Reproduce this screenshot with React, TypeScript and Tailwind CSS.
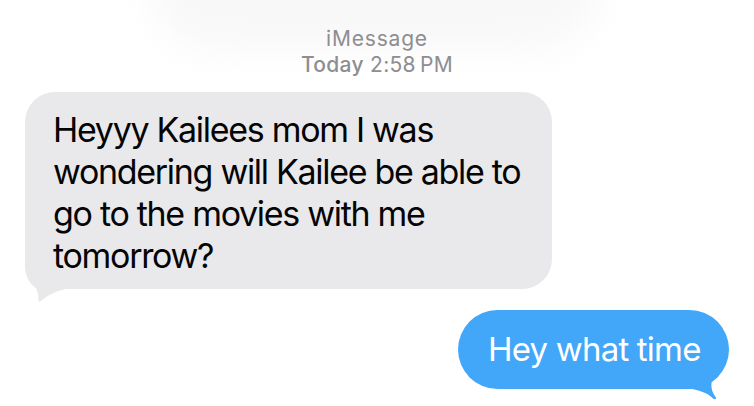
import React from 'react';

const FONT = 'font-["Inter","Liberation_Sans",sans-serif]';

// tail paths are drawn in the coordinates of the bubble's bottom-right corner
const BLUE_TAIL =
  'M -50 0 L -42 -1 C -30 1 -21 4 -16 9.5 C -14 11 -12.5 10 -13 8.5 C -16.5 4 -18 0 -17.5 -6 L -17.5 -30 L -50 -30 Z';
const GRAY_TAIL =
  'M -50 0 L -46 -1 C -34 1 -24 5 -16.5 11.5 C -14.5 13.5 -13 12.5 -13.5 10.5 C -13.5 6 -12.5 2 -11 -1 C -6 -4 0 -12 0 -22 L 0 -30 L -50 -30 Z';

const Tail: React.FC<{ d: string; color: string; side: 'left' | 'right' }> = ({ d, color, side }) => (
  <svg
    width="55"
    height="50"
    viewBox="-50 -30 55 50"
    className={
      side === 'right'
        ? 'absolute right-[-5px] bottom-[-20px]'
        : 'absolute left-[-5px] bottom-[-20px] -scale-x-100'
    }
  >
    <path d={d} fill={color} />
  </svg>
);

export default function App() {
  return (
    <div className={`relative w-[754px] h-[406px] overflow-hidden bg-white ${FONT}`}>
      {/* faint blur from the contact header above */}
      <div className="absolute left-[150px] top-[-80px] w-[450px] h-[130px] rounded-full bg-[#f8f8f8] blur-[18px]" />

      <div className="relative flex flex-col">
        <div className="flex flex-col items-center pt-[26px] text-[#8d8d92] leading-[26px]">
          <span className="text-[21px] tracking-[0.8px]">iMessage</span>
          <span className="text-[21px] tracking-[0.3px]">
            <span className="font-medium">Today</span> 2:58&#8239;PM
          </span>
        </div>

        <div className="flex pl-[25px] mt-[14px]">
          <div className="relative w-[527px] h-[197px] rounded-[30px] bg-[#e9e9eb] pl-[28px] pt-[17px]">
            <Tail d={GRAY_TAIL} color="#e9e9eb" side="left" />
            <div className="relative text-[34px] leading-[42px] text-[#050505] tracking-[-1.3px]">
              <div className="whitespace-nowrap">Heyyy Kailees mom I was</div>
              <div className="whitespace-nowrap">wondering will Kailee be able to</div>
              <div className="whitespace-nowrap">go to the movies with me</div>
              <div className="whitespace-nowrap">tomorrow?</div>
            </div>
          </div>
        </div>

        <div className="flex justify-end pr-[25px] mt-[21px]">
          <div className="relative flex items-center w-[271px] h-[79px] rounded-full bg-[#42a6f9] pl-[30px]">
            <Tail d={BLUE_TAIL} color="#42a6f9" side="right" />
            <span className="relative text-[33px] text-white whitespace-nowrap tracking-[-0.8px]">Hey what time</span>
          </div>
        </div>
      </div>
    </div>
  );
}
